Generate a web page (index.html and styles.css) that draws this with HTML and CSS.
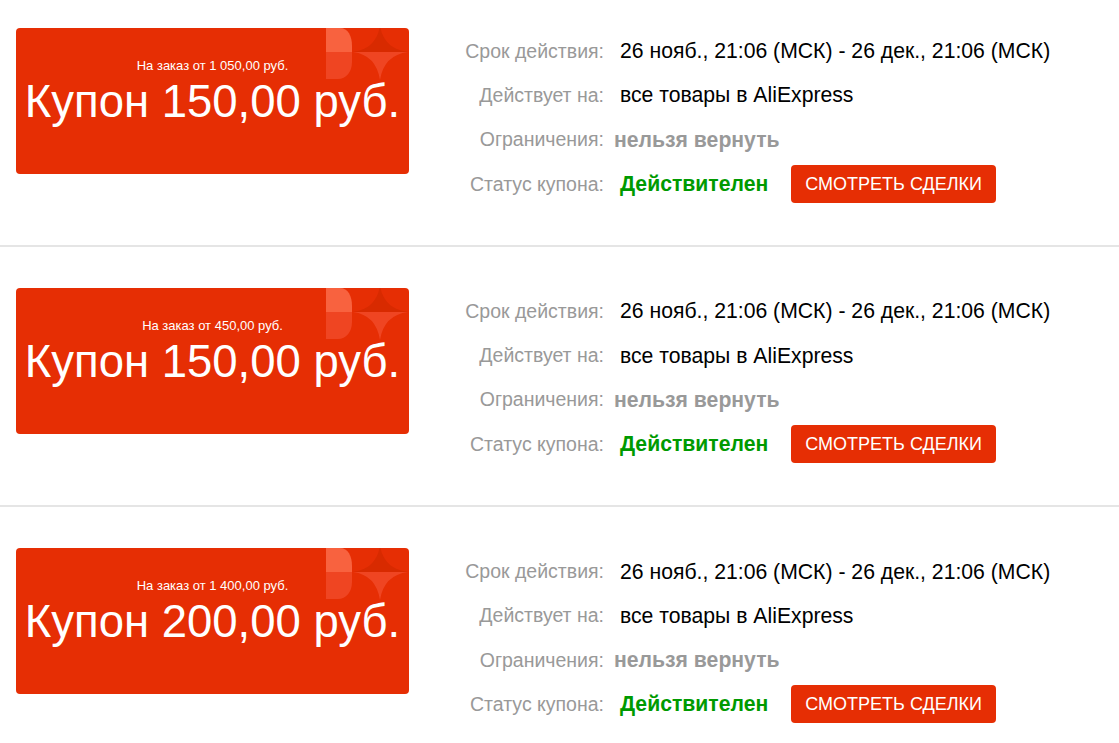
FILE: index.html
```html
<!DOCTYPE html>
<html lang="ru">
<head>
<meta charset="utf-8">
<title>Купоны</title>
<link rel="stylesheet" href="styles.css">
</head>
<body>
<div class="coupon-list">
  <div class="coupon-row">
    <div class="coupon-card">
      <svg class="deco" width="84" height="56" viewBox="0 0 84 56">
        <path d="M0 0 H14 C22 0 26 8 26 18 V24 H0 Z" fill="#f8623f"/>
        <path d="M0 24 H26 V34 C26 44 20 51 12 51 H0 Z" fill="#ef4522"/>
        <path d="M27 24 Q50 21 54 -2 Q58 21 82 24 Z" fill="#d82a00"/>
        <path d="M27 24 Q50 27 54 52 Q58 27 82 24 Z" fill="#ef4522"/>
      </svg>
      <div class="cond">На заказ от 1 050,00 руб.</div>
      <div class="amount">Купон 150,00 руб.</div>
    </div>
    <div class="details">
      <div class="label">Срок действия:</div><div class="value">26 нояб., 21:06 (МСК) - 26 дек., 21:06 (МСК)</div>
      <div class="label">Действует на:</div><div class="value">все товары в AliExpress</div>
      <div class="label">Ограничения:</div><div class="value restrict">нельзя вернуть</div>
      <div class="label">Статус купона:</div><div class="value status"><span class="valid">Действителен</span><a class="btn" href="#">СМОТРЕТЬ СДЕЛКИ</a></div>
    </div>
  </div>
  <div class="coupon-row">
    <div class="coupon-card">
      <svg class="deco" width="84" height="56" viewBox="0 0 84 56">
        <path d="M0 0 H14 C22 0 26 8 26 18 V24 H0 Z" fill="#f8623f"/>
        <path d="M0 24 H26 V34 C26 44 20 51 12 51 H0 Z" fill="#ef4522"/>
        <path d="M27 24 Q50 21 54 -2 Q58 21 82 24 Z" fill="#d82a00"/>
        <path d="M27 24 Q50 27 54 52 Q58 27 82 24 Z" fill="#ef4522"/>
      </svg>
      <div class="cond">На заказ от 450,00 руб.</div>
      <div class="amount">Купон 150,00 руб.</div>
    </div>
    <div class="details">
      <div class="label">Срок действия:</div><div class="value">26 нояб., 21:06 (МСК) - 26 дек., 21:06 (МСК)</div>
      <div class="label">Действует на:</div><div class="value">все товары в AliExpress</div>
      <div class="label">Ограничения:</div><div class="value restrict">нельзя вернуть</div>
      <div class="label">Статус купона:</div><div class="value status"><span class="valid">Действителен</span><a class="btn" href="#">СМОТРЕТЬ СДЕЛКИ</a></div>
    </div>
  </div>
  <div class="coupon-row">
    <div class="coupon-card">
      <svg class="deco" width="84" height="56" viewBox="0 0 84 56">
        <path d="M0 0 H14 C22 0 26 8 26 18 V24 H0 Z" fill="#f8623f"/>
        <path d="M0 24 H26 V34 C26 44 20 51 12 51 H0 Z" fill="#ef4522"/>
        <path d="M27 24 Q50 21 54 -2 Q58 21 82 24 Z" fill="#d82a00"/>
        <path d="M27 24 Q50 27 54 52 Q58 27 82 24 Z" fill="#ef4522"/>
      </svg>
      <div class="cond">На заказ от 1 400,00 руб.</div>
      <div class="amount">Купон 200,00 руб.</div>
    </div>
    <div class="details">
      <div class="label">Срок действия:</div><div class="value">26 нояб., 21:06 (МСК) - 26 дек., 21:06 (МСК)</div>
      <div class="label">Действует на:</div><div class="value">все товары в AliExpress</div>
      <div class="label">Ограничения:</div><div class="value restrict">нельзя вернуть</div>
      <div class="label">Статус купона:</div><div class="value status"><span class="valid">Действителен</span><a class="btn" href="#">СМОТРЕТЬ СДЕЛКИ</a></div>
    </div>
  </div>
</div>
</body>
</html>
```
FILE: styles.css
```css
html, body {
  margin: 0;
  padding: 0;
  background: #fff;
  font-family: "Liberation Sans", Arial, sans-serif;
}
.coupon-list {
  display: flex;
  flex-direction: column;
}
.coupon-row {
  display: flex;
  align-items: flex-start;
  padding: 41px 0 39px 16px;
  border-bottom: 2px solid #e5e5e5;
}
.coupon-row:first-child {
  padding-top: 28px;
}
.coupon-card {
  position: relative;
  overflow: hidden;
  width: 393px;
  height: 146px;
  box-sizing: border-box;
  padding-top: 30px;
  background: #e62e04;
  border-radius: 4px;
  color: #fff;
  display: flex;
  flex-direction: column;
  align-items: center;
}
.deco {
  position: absolute;
  top: 0;
  left: 310px;
}
.cond {
  position: relative;
  font-size: 13px;
  line-height: 15px;
}
.amount {
  position: relative;
  margin-top: 3px;
  font-size: 45.5px;
  line-height: 52px;
  white-space: nowrap;
}
.details {
  margin-left: 45px;
  padding-top: 1px;
  display: grid;
  grid-template-columns: 150px auto;
  grid-auto-rows: 44.3px;
  column-gap: 16px;
  align-items: center;
}
.label {
  text-align: right;
  color: #999;
  font-size: 19.5px;
  white-space: nowrap;
}
.value {
  color: #000;
  font-size: 21.2px;
  white-space: nowrap;
}
.restrict {
  margin-left: -6px;
  color: #999;
  font-weight: bold;
}
.status {
  display: flex;
  align-items: center;
  gap: 23px;
}
.valid {
  color: #009a00;
  font-weight: bold;
}
.btn {
  display: inline-block;
  background: #e62e04;
  color: #fff;
  text-decoration: none;
  font-size: 18px;
  line-height: 38px;
  padding: 0 14px;
  border-radius: 4px;
}
```
